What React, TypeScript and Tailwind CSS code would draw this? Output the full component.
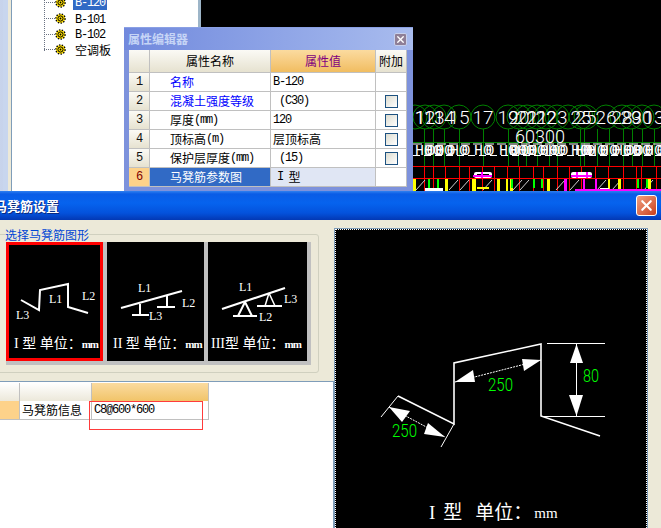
import { ReactNode } from "react";
import { X } from "lucide-react";

const Lat = ({ children }: { children: ReactNode }) => (
  <span className="font-['Liberation_Mono',monospace] tracking-[-1.2px]">{children}</span>
);

const Gear = () => (
  <svg width="11" height="11" viewBox="0 0 11 11" className="shrink-0">
    <circle cx="5.5" cy="5.5" r="4.6" fill="#ffe000" stroke="#000" strokeWidth="1.4" strokeDasharray="1.4 1.4" />
    <circle cx="5.5" cy="5.5" r="2.6" fill="#ffe000" stroke="#000" strokeWidth="1" />
    <circle cx="5.5" cy="5.5" r="0.9" fill="#000" />
  </svg>
);

const treeRows = ["B-120", "B-101", "B-102", "空调板"];

const TreePanel = () => (
  <div className="absolute left-0 top-0 flex h-[191px] w-[201px] bg-white">
    <div className="h-full w-[3px] bg-[repeating-linear-gradient(90deg,#ffffff_0px,#8fa8d8_1px,#ffffff_2px)]" />
    <div className="h-full w-[5px] bg-[#c8d6ee]" />
    <div className="h-full w-[3px] bg-[#ece9d8]" />
    <div className="h-full w-px bg-[#7f9db9]" />
    <div className="relative flex-1">
      <div className="absolute left-[32px] top-0 h-[51px] border-l border-dotted border-gray-500" />
      <div className="-mt-[5px] ml-[32px] flex flex-col">
        {treeRows.map((row, index) => (
          <div key={row} className="flex h-[15.7px] items-center">
            <div className="w-[11px] border-t border-dotted border-gray-500" />
            <Gear />
            <span
              className={
                index === 0
                  ? "ml-[7px] bg-[#316ac5] px-[2px] pb-[1px] text-white"
                  : "ml-[9px] text-black"
              }
            >
              {index < 3 ? <Lat>{row}</Lat> : row}
            </span>
          </div>
        ))}
      </div>
    </div>
    <div className="h-full w-[3px] bg-[#9db5c8]" />
  </div>
);

const headerCell = "flex items-center justify-center border-r border-b border-[#c0c0c0] bg-gradient-to-b from-[#fbfaf5] to-[#e6e2d0]";
const bodyCell = "flex items-center border-r border-b border-[#c0c0c0]";

const propRows: { name: ReactNode; value: ReactNode; blue?: boolean; check?: boolean }[] = [
  { name: "名称", value: <Lat>B-120</Lat>, blue: true },
  { name: "混凝土强度等级", value: <Lat>&nbsp;(C30)</Lat>, blue: true, check: true },
  { name: <>厚度<Lat>(mm)</Lat></>, value: <Lat>120</Lat>, check: true },
  { name: <>顶标高<Lat>(m)</Lat></>, value: "层顶标高", check: true },
  { name: <>保护层厚度<Lat>(mm)</Lat></>, value: <Lat>&nbsp;(15)</Lat>, check: true },
];

const PropertyEditor = () => (
  <div className="absolute left-[124px] top-[27px] h-[170px] w-[289px] border-t border-[#8aa0e4] bg-[#7d92dc]">
    <div className="flex h-[22px] items-center justify-between bg-gradient-to-r from-[#7189dd] to-[#a9bcee] pl-[4px] pr-[6px]">
      <span className="font-bold text-[#c6d5f6]">属性编辑器</span>
      <span className="flex h-[13px] w-[13px] items-center justify-center rounded-[2px] border border-[#c7d0ec] bg-[#8f7f96]">
        <X size={11} strokeWidth={3} className="text-white" />
      </span>
    </div>
    <div className="ml-[5px] grid w-[278px] grid-cols-[21px_121px_105px_31px] grid-rows-[23px_repeat(6,19px)] bg-white">
      <div className={headerCell} />
      <div className={headerCell}>属性名称</div>
      <div className="flex items-center justify-center border-r border-b border-[#c0c0c0] bg-gradient-to-b from-[#fbdb9f] to-[#f1bd60] text-[#800080]">属性值</div>
      <div className={headerCell}>附加</div>
      {propRows.map((row, index) => (
        <div key={index} className="contents">
          <div className={`${headerCell} text-[#111]`}><Lat>{index + 1}</Lat></div>
          <div className={`${bodyCell} pl-[20px] ${row.blue ? "text-[#0000ff]" : "text-black"}`}>{row.name}</div>
          <div className={`${bodyCell} pl-[2px] text-black`}>{row.value}</div>
          <div className={`${bodyCell} justify-center`}>
            {row.check ? (
              <span className="h-[13px] w-[13px] border border-[#1c5180] bg-gradient-to-br from-[#dcdcd0] to-white" />
            ) : null}
          </div>
        </div>
      ))}
      <div className="flex items-center justify-center border-r border-b border-[#c0c0c0] bg-[#fdd28a] text-[#800000]"><Lat>6</Lat></div>
      <div className="flex items-center border-r border-b border-[#c0c0c0] bg-[#316ac5] pl-[20px] text-white">马凳筋参数图</div>
      <div className="flex items-center border-r border-b border-[#c0c0c0] bg-[#e0e6f4] pl-[6px] text-black"><Lat>I</Lat>&nbsp;&nbsp;型</div>
      <div className={bodyCell} />
    </div>
  </div>
);

const circles = [415, 425, 434, 444, 459, 483, 508, 519, 527, 537, 546, 557, 568, 581, 586, 606, 622, 631, 642, 654];
const labels = ["11", "12", "13", "14", "15", "17", "19", "20", "21", "21", "22", "23", "", "25", "25", "26", "28", "29", "30", "13"];
const stems = [424, 433, 444, 459, 483, 508, 518, 526, 537, 549, 557, 580, 584, 597, 609, 623, 632, 642, 654];
const redStems = [424, 433, 445, 459, 469, 482, 494, 507, 519, 533, 543, 557, 569, 581, 595, 608, 623, 636, 641, 656];
const yellow = [[413, 3], [445, 3], [472, 4], [497, 3], [506, 2], [510, 3], [547, 3], [608, 2], [618, 3], [648, 3]];
const green = [[428, 2], [437, 2], [511, 2], [533, 2], [541, 2], [637, 2], [646, 2]];
const magenta = [[564, 3], [583, 2], [595, 2]];
const slashes = [416, 449, 460, 483, 513, 520, 556, 570, 597, 612, 644];

// the drawing behind the windows
const CadBackground = () => (
  <svg className="absolute left-[413px] top-[95px]" width="248" height="96" viewBox="413 95 248 96">
    {circles.map((x) => (
      <circle key={x} cx={x} cy={117} r={12} fill="none" stroke="#008000" />
    ))}
    {stems.map((x) => (
      <line key={x} x1={x + 0.5} y1={129} x2={x + 0.5} y2={166} stroke="#008000" />
    ))}
    <line x1={413} y1={142.5} x2={661} y2={142.5} stroke="#008000" />
    {circles.map((x, i) => (
      <text key={x} x={x} y={123.5} fontSize={19} fontWeight={300} fill="#fff" textAnchor="middle" fontFamily="Roboto">
        {labels[i]}
      </text>
    ))}
    <text x={540} y={143} fontSize={18} fontWeight={300} fill="#fff" textAnchor="middle" fontFamily="Roboto">60300</text>
    <line x1={413} y1={144} x2={661} y2={144} stroke="#fff" strokeDasharray="9 3" />
    <line x1={413} y1={155.5} x2={661} y2={155.5} stroke="#fff" strokeDasharray="7 4" />
    {stems.map((x) => (
      <text key={x} x={x} y={155} fontSize={15} fill="#fff" textAnchor="middle" fontFamily="Liberation Mono">
        H0
      </text>
    ))}
    {stems.map((x) => (
      <text key={x} x={x + 7} y={155} fontSize={15} fill="#fff" textAnchor="middle" fontFamily="Liberation Mono">
        0
      </text>
    ))}
    <line x1={413} y1={166.5} x2={661} y2={166.5} stroke="#ff0000" />
    <line x1={413} y1={178.5} x2={661} y2={178.5} stroke="#ff0000" />
    {redStems.map((x) => (
      <line key={x} x1={x + 0.5} y1={166} x2={x + 0.5} y2={191} stroke="#ff0000" />
    ))}
    {slashes.map((x) => (
      <line key={x} x1={x} y1={190} x2={x + 9} y2={180} stroke="#cfcfcf" />
    ))}
    {yellow.map(([x, w]) => (
      <rect key={x} x={x} y={179} width={w} height={12} fill="#ffff00" />
    ))}
    {green.map(([x, w]) => (
      <rect key={x} x={x} y={179} width={w} height={9} fill="#00ff00" />
    ))}
    {magenta.map(([x, w]) => (
      <rect key={x} x={x} y={179} width={w} height={12} fill="#ff00ff" />
    ))}
    <rect x={425} y={188} width={18} height={3} fill="#fff" />
    <rect x={477} y={187} width={12} height={2} fill="#ffff00" />
    <rect x={600} y={188} width={9} height={3} fill="#fff" />
    <rect x={575} y={189} width={86} height={2} fill="#ff00ff" />
    <rect x={474} y={172} width={18} height={6} rx={2} fill="#fff" />
    <rect x={477} y={174} width={12} height={2} fill="#000" />
    <rect x={473} y={175} width={19} height={2} fill="#ff00ff" />
    <rect x={481} y={172} width={2} height={6} fill="#ff00ff" />
    <rect x={571} y={172} width={21} height={6} rx={2} fill="#fff" />
    <rect x={571} y={175} width={21} height={2} fill="#ff00ff" />
    <rect x={576} y={172} width={2} height={6} fill="#ff00ff" />
    <rect x={586} y={172} width={2} height={6} fill="#ff00ff" />
  </svg>
);

type ThumbProps = {
  x: number;
  width: number;
  selected?: boolean;
  caption: string;
  captionClass: string;
  children: ReactNode;
};

const Thumb = ({ x, width, selected, caption, captionClass, children }: ThumbProps) => (
  <div
    className={
      selected
        ? "flex h-[119px] flex-col border-[3px] border-[#ff0000] bg-black"
        : "flex h-[119px] flex-col border-[3px] border-black bg-black"
    }
    style={{ width }}
  >
    <svg width={width - 6} height={89} viewBox={`${x + 3} 245 ${width - 6} 89`} className="shrink-0">
      <g fill="none" stroke="#fff" strokeWidth="2">{children}</g>
    </svg>
    <div className={`flex items-center whitespace-pre pt-[2px] font-['Liberation_Serif','Noto_Sans_CJK_SC',serif] text-[14px] leading-[16px] text-white ${captionClass}`}>
      {caption}
      <span className="text-[11px] font-bold tracking-[-1px]">mm</span>
    </div>
  </div>
);

const ThumbLabel = ({ x, y, children }: { x: number; y: number; children: string }) => (
  <text x={x} y={y} fontSize={12} fill="#fff" stroke="none" fontFamily="Liberation Serif">
    {children}
  </text>
);

const ShapeThumbs = () => (
  <div className="flex w-[305px] gap-[4px] bg-[#c0c0c0] pb-[4px]">
    <Thumb x={6} width={97} selected caption="I 型 单位：" captionClass="pl-[5px]">
      <polyline points="21,300 39,310 40,290 68,284 68,307 88,313" />
      <ThumbLabel x={49} y={303}>L1</ThumbLabel>
      <ThumbLabel x={82} y={300}>L2</ThumbLabel>
      <ThumbLabel x={16} y={319}>L3</ThumbLabel>
    </Thumb>
    <Thumb x={107} width={97} caption="II 型 单位：" captionClass="pl-[3px]">
      <line x1={121} y1={308} x2={182} y2={291} />
      <line x1={140} y1={304} x2={140} y2={315} />
      <line x1={132} y1={315} x2={149} y2={315} />
      <line x1={167} y1={296} x2={167} y2={307} />
      <line x1={157} y1={307} x2={175} y2={307} />
      <ThumbLabel x={138} y={292}>L1</ThumbLabel>
      <ThumbLabel x={182} y={307}>L2</ThumbLabel>
      <ThumbLabel x={149} y={320}>L3</ThumbLabel>
    </Thumb>
    <Thumb x={208} width={99} caption="III型 单位：" captionClass="pl-0">
      <line x1={222} y1={309} x2={285} y2={288} />
      <polyline points="245,302 238,316 252,316 245,302" />
      <line x1={233} y1={316} x2={257} y2={316} />
      <polyline points="269,293 265,306 275,306 269,293" strokeWidth="1.5" />
      <line x1={257} y1={306} x2={282} y2={306} />
      <ThumbLabel x={239} y={291}>L1</ThumbLabel>
      <ThumbLabel x={259} y={321}>L2</ThumbLabel>
      <ThumbLabel x={284} y={303}>L3</ThumbLabel>
    </Thumb>
  </div>
);

const RebarTable = () => (
  <div className="relative -ml-[1px] mt-[8px] min-h-0 flex-1 border-t border-r border-[#7f9db9] bg-white pt-[1px]">
    <div className="grid w-[210px] grid-cols-[21px_72px_117px] grid-rows-[18px_19px]">
      <div className="border-r border-[#c0c0c0] bg-gradient-to-b from-white to-[#ece8da]" />
      <div className="border-r border-[#c0c0c0] bg-gradient-to-b from-white to-[#ece8da]" />
      <div className="border-r border-[#c0c0c0] bg-gradient-to-b from-[#fbdb9f] to-[#f1c468]" />
      <div className="border-r border-b border-[#c0c0c0] bg-[#fdd28a]" />
      <div className="flex items-center border-r border-b border-[#c0c0c0] pl-[2px] text-black">马凳筋信息</div>
      <div className="flex items-center border-r border-b border-[#c0c0c0] pl-[2px] text-black"><Lat>C8@600*600</Lat></div>
    </div>
    <div className="absolute left-[90px] top-[19px] h-[29px] w-[114px] border border-[#ff3b3b]" />
  </div>
);

const Preview = () => (
  <div className="mt-[8px] flex h-full w-[314px] flex-col border border-[#7f9db9] border-b-0">
    <div className="flex flex-1 flex-col border-x border-t border-dotted border-white bg-black">
      <svg width="310" height="266" viewBox="336 230 310 266" className="shrink-0">
        <polyline points="398,396 454,424 454,363 541,344 541,416 600,436" fill="none" stroke="#fff" strokeWidth="1.6" />
        <g stroke="#fff" fill="none" strokeWidth="1">
          <line x1={398} y1={396} x2={381} y2={417} />
          <line x1={454} y1={424} x2={441} y2={447} />
          <line x1={389} y1={407} x2={445} y2={437} strokeDasharray="2 1" />
          <line x1={455} y1={382} x2={541} y2={360} strokeDasharray="2 1" />
          <line x1={547} y1={343.5} x2={605} y2={343.5} />
          <line x1={542} y1={416.5} x2={605} y2={416.5} />
          <line x1={576.5} y1={344} x2={576.5} y2={416} />
        </g>
        <g fill="#fff">
          <polygon points="389,407 410,411 402,422" />
          <polygon points="445,437 428,423 424,434" />
          <polygon points="455,382 473,370 475,382" />
          <polygon points="541,360 522,359 524,371" />
          <polygon points="576.5,344 570,363 583,363" />
          <polygon points="576.5,416 569,395 583,395" />
        </g>
        <g fill="#00ff00" fontSize={18} fontWeight={300} fontFamily="Roboto" stroke="none">
          <text x={488} y={391} textLength={25} lengthAdjust="spacingAndGlyphs">250</text>
          <text x={392} y={437} textLength={25} lengthAdjust="spacingAndGlyphs">250</text>
          <text x={583} y={382} textLength={16} lengthAdjust="spacingAndGlyphs">80</text>
        </g>
      </svg>
      <div className="ml-[93px] mt-[5px] flex items-center whitespace-pre font-['Liberation_Serif','Noto_Sans_CJK_SC',serif] text-[19px] leading-[24px] text-white">
        <span>I</span>
        <span className="ml-[8px]">型</span>
        <span className="ml-[13px]">单位：</span>
        <span className="ml-[2px] text-[15px]">mm</span>
      </div>
    </div>
  </div>
);

const RebarDialog = () => (
  <div className="absolute left-0 top-[191px] flex h-[337px] w-[661px] flex-col overflow-hidden">
    <div className="flex h-[29px] shrink-0 items-center justify-between bg-[linear-gradient(180deg,#2f80f0_0px,#0a5ce6_3px,#0663ee_12px,#0452dc_22px,#0338b4_29px)] pr-[4px]">
      <span className="-ml-[6px] text-[13px] font-bold text-white [text-shadow:1px_1px_0_#0a2a80]">马凳筋设置</span>
      <span className="flex h-[21px] w-[21px] items-center justify-center rounded-[3px] border border-white bg-gradient-to-br from-[#f0a080] to-[#c83c18]">
        <X size={17} strokeWidth={3} className="text-white" />
      </span>
    </div>
    <div className="flex min-h-0 flex-1 bg-[#ece9d8]">
      <div className="flex h-full w-[334px] shrink-0 flex-col">
        <div className="relative -ml-[4px] mt-[14px] h-[139px] w-[323px] shrink-0 rounded-[3px] border border-[#d0d0bf] pl-[9px] pt-[7px]">
          <span className="absolute -top-[7px] left-[8px] bg-[#ece9d8] leading-[13px] text-[#0046d5]">选择马凳筋图形</span>
          <ShapeThumbs />
        </div>
        <RebarTable />
      </div>
      <Preview />
    </div>
  </div>
);

export default function App() {
  return (
    <div className="relative h-[528px] w-[661px] overflow-hidden bg-black font-['Noto_Sans_CJK_SC',sans-serif] text-[12px] leading-none">
      <CadBackground />
      <TreePanel />
      <PropertyEditor />
      <RebarDialog />
    </div>
  );
}
